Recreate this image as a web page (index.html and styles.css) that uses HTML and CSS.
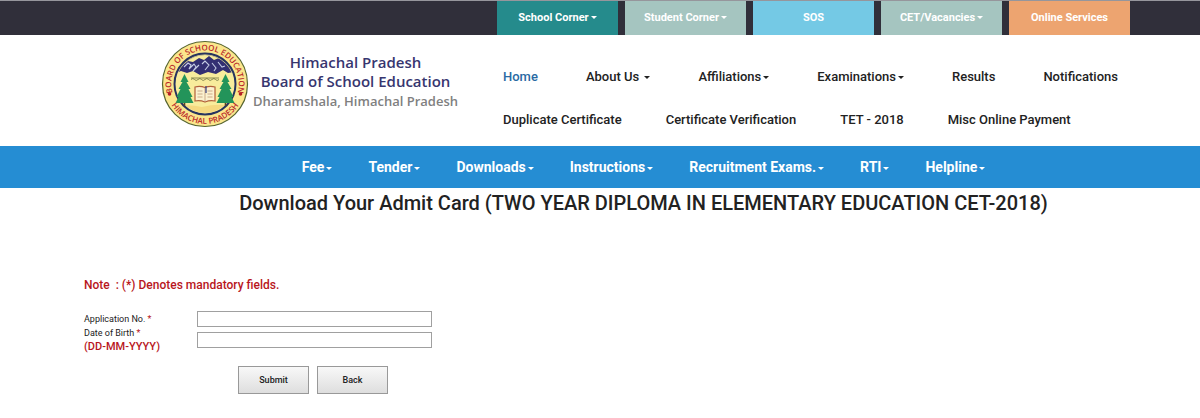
FILE: index.html
```html
<!DOCTYPE html>
<html lang="en">
<head>
    <meta charset="utf-8">
    <title>Himachal Pradesh Board of School Education</title>
    <link rel="stylesheet" href="styles.css">
</head>
<body>
    <nav class="top-bar">
        <a class="tab teal caret" href="#">School Corner</a>
        <a class="tab sage caret" href="#">Student Corner</a>
        <a class="tab sky" href="#">SOS</a>
        <a class="tab sage caret" href="#">CET/Vacancies</a>
        <a class="tab orange" href="#">Online Services</a>
    </nav>

    <header class="header">
        <a class="brand" href="#">
            <svg class="emblem" viewBox="0 0 88 88">
                <defs>
                    <path id="arcTop" d="M11.5 53 A33.7 33.7 0 1 1 76.5 53"/>
                    <path id="arcBottom" d="M5 52 A39.8 39.8 0 0 0 83 52"/>
                    <clipPath id="inner"><circle cx="44" cy="44" r="29"/></clipPath>
                </defs>
                <circle cx="44" cy="44" r="42.5" fill="#fbe68c" stroke="#57652f" stroke-width="1.2"/>
                <circle cx="44" cy="44" r="30.5" fill="#f8ec9c" stroke="#28345f" stroke-width="2"/>
                <g clip-path="url(#inner)">
                    <path d="M15 14h58v18l-6 1-5-3-7 4-8-2-8 3-7-4-6 2-6-2-5 2z" fill="#332f72"/>
                    <path d="M15 14h58v10l-5-3-4 2-6-5-5 2-5-4-5 4-5-2-6 4-5-1-5 4-7-1z" fill="#f8ec9c"/>
                    <path d="M23 27l4-4 3 2-2 4 5-5 2 3-3 4 6-6M41 24l3-3 4 4-4 5M51 23l4 5-2 3M57 22l4 5 3-1" fill="none" stroke="#c5cce4" stroke-width="1.1"/>
                    <path d="M16 66q13-2 25 1 15-4 30-1v12H16z" fill="#f5d980"/>
                </g>
                <path d="M30 39.5q2-2 3.500 0t3.500 0 3.500 0 3.500 0 3.500 0 3.500 0 3.500 0 3.500 0M30 38h28" fill="none" stroke="#6d713f" stroke-width=".8"/>
                <g fill="#23945a">
                    <path d="M23.5 34l4 8h-2l4 7h-2l4 8h-2l3 6h-18l3-6h-2l4-8h-2l4-7h-2z"/>
                    <path d="M64.5 34l4 8h-2l4 7h-2l4 8h-2l3 6h-18l3-6h-2l4-8h-2l4-7h-2z"/>
                </g>
                <path d="M23.5 63v3M64.5 63v3" stroke="#5a4226" stroke-width="1.6"/>
                <path d="M34 47q5-1.500 10 .5 5-2 10-.5v14q-5-1-10 1-5-2-10-1z" fill="#fbf1cf" stroke="#b2603a" stroke-width="1.2"/>
                <path d="M44 47.500V62M36.500 51h5M36.500 54h5M36.500 57h5M46.500 51h5M46.500 54h5M46.500 57h5" stroke="#b98c6b" stroke-width=".7"/>
                <path d="M45 46v7" stroke="#343b79" stroke-width="1.2"/>
                <circle cx="8.5" cy="54" r="1.8" fill="#b51f24"/>
                <circle cx="79.5" cy="54" r="1.8" fill="#b51f24"/>
                <text class="emblem-text"><textPath href="#arcTop" startOffset="50%">BOARD OF SCHOOL EDUCATION</textPath></text>
                <text class="emblem-text"><textPath href="#arcBottom" startOffset="50%">HIMACHAL PRADESH</textPath></text>
            </svg>
            <span class="brand-text">
                <span class="brand-name">Himachal Pradesh<br>Board of School Education</span>
                <span class="brand-place">Dharamshala, Himachal Pradesh</span>
            </span>
        </a>
        <nav class="main-nav">
            <div class="nav-row">
                <a class="current" href="#">Home</a>
                <a class="caret" href="#">About Us&nbsp;</a>
                <a class="caret" href="#">Affiliations</a>
                <a class="caret" href="#">Examinations</a>
                <a href="#">Results</a>
                <a href="#">Notifications</a>
            </div>
            <div class="nav-row">
                <a href="#">Duplicate Certificate</a>
                <a href="#">Certificate Verification</a>
                <a href="#">TET - 2018</a>
                <a href="#">Misc Online Payment</a>
            </div>
        </nav>
    </header>

    <nav class="blue-bar">
        <a class="caret" href="#">Fee</a>
        <a class="caret" href="#">Tender</a>
        <a class="caret" href="#">Downloads</a>
        <a class="caret" href="#">Instructions</a>
        <a class="caret" href="#">Recruitment Exams.</a>
        <a class="caret" href="#">RTI</a>
        <a class="caret" href="#">Helpline</a>
    </nav>

    <main>
        <h1>Download Your Admit Card (TWO YEAR DIPLOMA IN ELEMENTARY EDUCATION CET-2018)</h1>
        <form class="admit-form">
            <p class="note">Note &nbsp;: (*) Denotes mandatory fields.</p>
            <div class="fields">
                <label for="appNo">Application No. <span class="required">*</span></label>
                <input type="text" id="appNo" name="appNo">
                <label for="dob">Date of Birth <span class="required">*</span><span class="format">(DD-MM-YYYY)</span></label>
                <input type="text" id="dob" name="dob">
            </div>
            <div class="buttons">
                <button type="submit">Submit</button>
                <button type="button">Back</button>
            </div>
        </form>
    </main>
</body>
</html>
```
FILE: styles.css
```css
* {
    box-sizing: border-box;
}
body {
    margin: 0;
    background-color: #fff;
    color: #222;
    font-family: Roboto, "Liberation Sans", sans-serif;
    font-size: 13px;
}
a {
    color: inherit;
    text-decoration: none;
    white-space: nowrap;
}
.caret::after {
    content: "";
    display: inline-block;
    margin-left: 2px;
    vertical-align: 2px;
    border-top: 3px solid;
    border-left: 3px solid transparent;
    border-right: 3px solid transparent;
}

/* top bar */
.top-bar {
    display: flex;
    justify-content: flex-end;
    gap: 7px;
    height: 35px;
    padding-right: 70px;
    border-top: 1px solid #96969c;
    background-color: #302f3a;
}
.tab {
    width: 121px;
    color: #fff;
    font-size: 11px;
    font-weight: bold;
    line-height: 34px;
    text-align: center;
}
.teal {
    background-color: #258b8c;
}
.sage {
    background-color: #a5c5c0;
}
.sky {
    background-color: #74c9e5;
}
.orange {
    background-color: #eda470;
}

/* logo and main menu */
.header {
    display: flex;
    padding: 5px 0 0 161px;
    height: 111px;
}
.brand {
    display: flex;
    width: 342px;
    gap: 4px;
}
.emblem {
    width: 88px;
    height: 88px;
}
.emblem-text {
    fill: #b9282a;
    font-family: "Open Sans", sans-serif;
    font-size: 8px;
    font-weight: 600;
    text-anchor: middle;
}
.brand-text {
    padding-top: 13px;
    font-family: "Open Sans", sans-serif;
    text-align: center;
}
.brand-name {
    display: block;
    color: #37366f;
    font-size: 15px;
    font-weight: 600;
    line-height: 19px;
}
.brand-place {
    color: #808080;
    font-size: 13px;
    font-weight: 600;
    line-height: 21px;
}
.main-nav {
    padding-top: 27px;
    font-weight: 500;
    line-height: 20px;
}
.nav-row {
    display: flex;
    gap: 48px;
    margin-bottom: 23px;
}
.nav-row + .nav-row {
    gap: 44px;
}
.current {
    color: #2a6aa3;
}

.blue-bar {
    display: flex;
    justify-content: center;
    gap: 36px;
    padding-left: 87px;
    background-color: #258dd3;
    color: #fff;
    font-size: 14px;
    font-weight: bold;
    line-height: 42px;
}

/* page */
h1 {
    margin: 0;
    padding-left: 87px;
    font-size: 20px;
    font-weight: 500;
    line-height: 30px;
    text-align: center;
}
.admit-form {
    padding: 57px 0 0 84px;
}
.note {
    margin: 0 0 16px;
    color: #b8161c;
    font-size: 12px;
    font-weight: 500;
    line-height: 20px;
}
.fields {
    display: grid;
    grid-template-columns: 113px 235px;
    row-gap: 5px;
    font-size: 9px;
    line-height: 16px;
}
.fields input {
    height: 16px;
    padding: 0 3px;
    border: 1px solid #a0a0a0;
    font-size: 9px;
}
.fields label + input + label {
    line-height: 12px;
    margin-top: -5px;
}
.required,
.format {
    color: #b8161c;
}
.format {
    display: block;
    font-size: 11px;
    font-weight: 500;
    line-height: 16px;
}
.buttons {
    display: flex;
    gap: 8px;
    padding: 11px 0 0 154px;
}
button {
    width: 71px;
    height: 28px;
    border: 1px solid #999;
    background: linear-gradient(#f8f8f8, #dedede);
    color: #222;
    font-family: inherit;
    font-size: 9px;
    font-weight: 500;
}
```
